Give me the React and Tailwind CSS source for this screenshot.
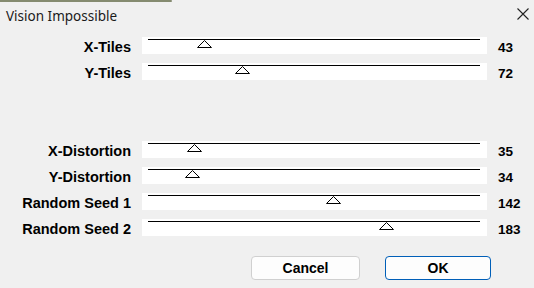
import React from 'react';

const sliders = [
  { label: 'X-Tiles', value: 43 },
  { label: 'Y-Tiles', value: 72 },
  null,
  null,
  { label: 'X-Distortion', value: 35 },
  { label: 'Y-Distortion', value: 34 },
  { label: 'Random Seed 1', value: 142 },
  { label: 'Random Seed 2', value: 183 },
];

function Slider({ value }) {
  // track runs 6px..338px inside the white box, range 0..255
  const left = 6 + (value / 255) * 332 - 7;
  return (
    <div className="relative w-[345px] h-[17px] bg-white">
      <div className="absolute left-[6px] top-[2px] w-[332px] h-px bg-black" />
      <svg className="absolute top-[3px]" style={{ left }} width="15" height="8" viewBox="0 0 15 8">
        <polygon points="7.5,0.5 14.5,7.5 0.5,7.5" fill="white" stroke="black" strokeWidth="1" />
      </svg>
    </div>
  );
}

export default function App() {
  return (
    <div className="relative w-[534px] h-[288px] bg-[#f0f0f0] overflow-hidden" style={{ fontFamily: '"Liberation Sans", Arial, sans-serif' }}>
      {/* bit of the window behind */}
      <div className="absolute left-0 top-0 w-[172px] h-[2px] bg-[#858b70] rounded-r-full" />

      {/* Title bar */}
      <div className="flex items-center justify-between h-[33px] pl-[6px] pr-[4px]">
        <span className="text-[13.5px] text-[#1a1a1a]" style={{ fontFamily: '"Noto Sans", "Open Sans", sans-serif' }}>Vision Impossible</span>
        <svg className="mb-[5px]" width="14" height="14" viewBox="0 0 14 14">
          <path d="M1.5 1.5 L12.5 12.5 M12.5 1.5 L1.5 12.5" stroke="#222" strokeWidth="1.1" />
        </svg>
      </div>

      {/* Slider rows */}
      <div className="flex flex-col pt-[4px]">
        {sliders.map((s, i) => (
          <div key={i} className="flex items-start h-[26px]">
            {s && (
              <>
                <div className="w-[131px] text-right text-[14.5px] font-bold text-black pt-[2px] leading-[17px]">{s.label}</div>
                <div className="ml-[11px]">
                  <Slider value={s.value} />
                </div>
                <div className="ml-[11px] text-[13.5px] font-bold text-black pt-[2px] leading-[17px]">{s.value}</div>
              </>
            )}
          </div>
        ))}
      </div>

      {/* Buttons */}
      <div className="flex justify-end gap-[25px] pr-[43px] pt-[11px]">
        <button className="w-[109px] h-[24px] rounded-[4px] border border-[#d0d0d0] bg-[#fdfdfd] text-[14px] font-bold text-black">Cancel</button>
        <button className="w-[106px] h-[24px] rounded-[4px] border border-[#005fb8] bg-[#fdfdfd] text-[14px] font-bold text-black">OK</button>
      </div>
    </div>
  );
}
